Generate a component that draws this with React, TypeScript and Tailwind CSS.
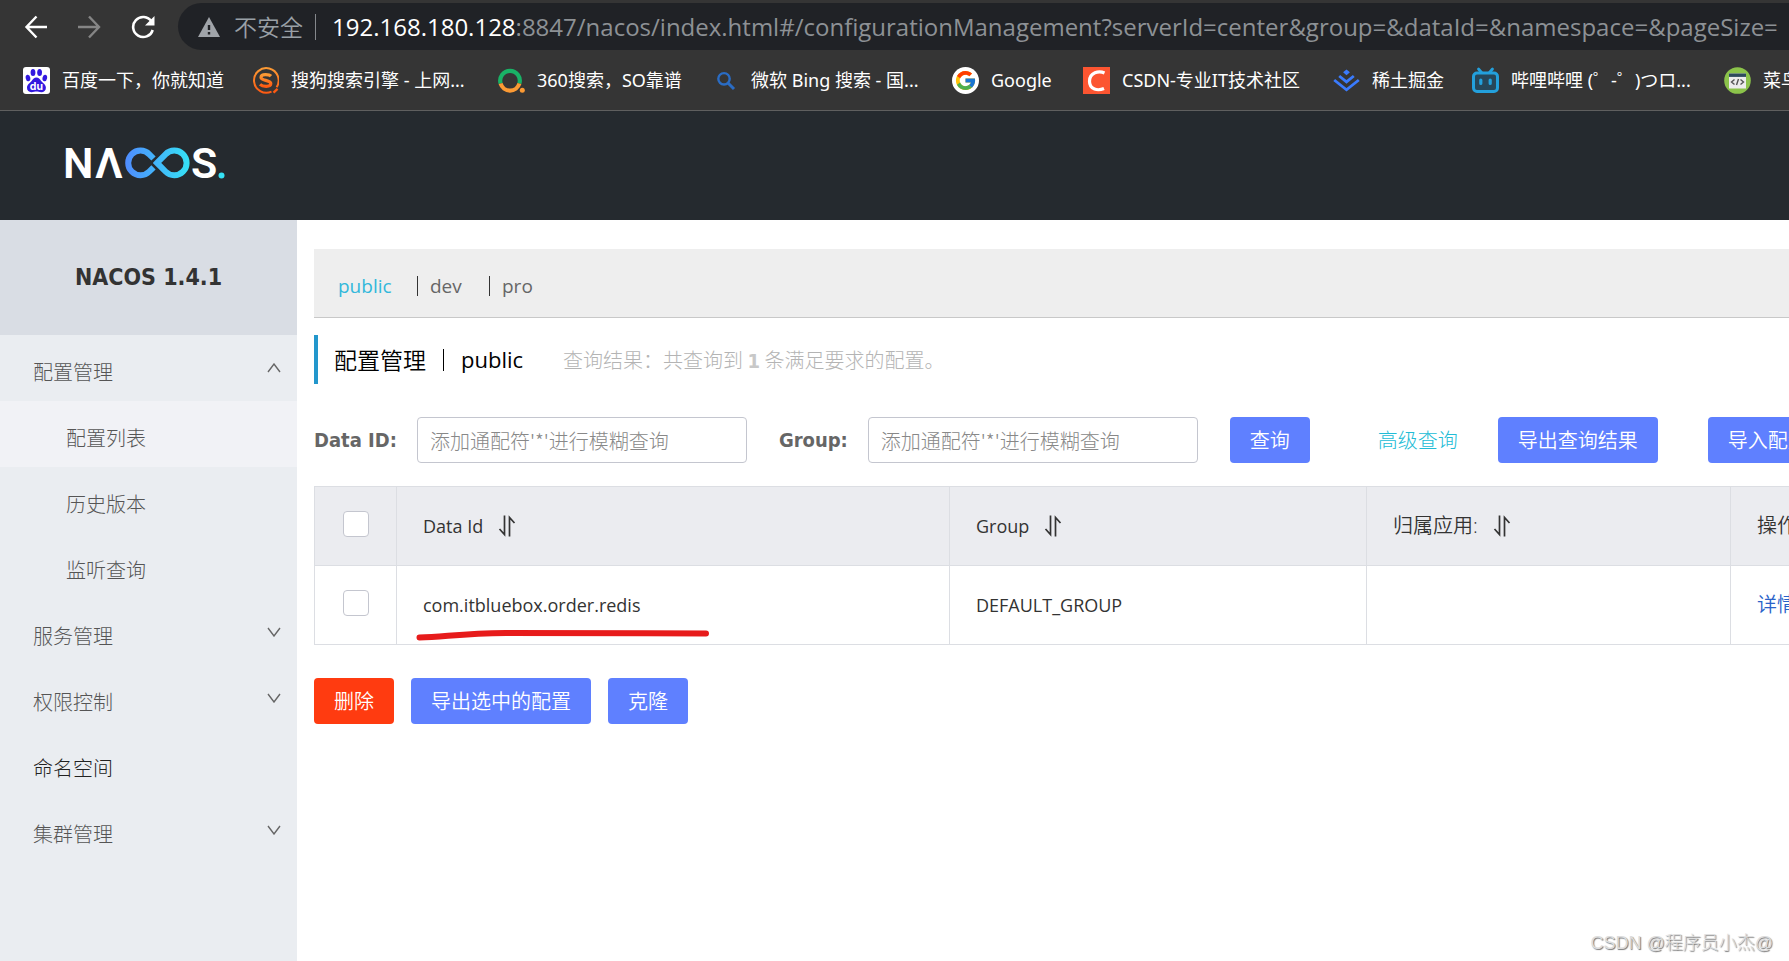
import { useState, type ReactNode } from "react";
import { FcGoogle } from "react-icons/fc";

const LATIN = "font-['Open_Sans','Noto_Sans_CJK_SC',sans-serif]";
const BOLD = "font-['DejaVu_Sans_Condensed','Noto_Sans_CJK_SC',sans-serif] font-bold";

function BaiduIcon() {
  return (
    <svg viewBox="0 0 27 27" className="size-[27px]">
      <rect width="27" height="27" rx="3" fill="#fff" />
      <g fill="#3218df">
        <ellipse cx="10" cy="5.6" rx="2.4" ry="3.5" />
        <ellipse cx="16.6" cy="5.6" rx="2.4" ry="3.5" />
        <ellipse cx="5" cy="11" rx="2.3" ry="3.2" transform="rotate(-12 5 11)" />
        <ellipse cx="21.8" cy="11" rx="2.3" ry="3.2" transform="rotate(12 21.8 11)" />
        <path d="M13.4 10.6c2.2 0 3.4 1.4 4.6 3.2 1.5 2 4.9 3.6 4.9 7 0 3-2.2 4.5-4.7 4.400-1.900-.1-3.200-.6-4.800-.6s-3 .5-4.800.6C6 25.300 4 23.700 4 20.800c0-3.400 3.300-4.900 4.800-7 1.200-1.800 2.400-3.200 4.600-3.200z" />
      </g>
      <text x="13.4" y="22.6" textAnchor="middle" fontSize="10.5" fontWeight="700" fontFamily="Inter" fill="#fff">du</text>
    </svg>
  );
}

function SogouIcon() {
  return (
    <svg viewBox="0 0 27 27" className="size-[27px]">
      <defs>
        <linearGradient id="sogou" x1="0" y1="0" x2="0" y2="1">
          <stop offset="0" stopColor="#fb9a34" />
          <stop offset="1" stopColor="#fd5a12" />
        </linearGradient>
      </defs>
      <path d="M24.6 20.2A12.3 12.3 0 1 0 19.5 24.6" fill="none" stroke="url(#sogou)" strokeWidth="2" />
      <path d="M21.5 25.6l4-3.8" stroke="#fd5a12" strokeWidth="2.4" />
      <path d="M19 9.2C17.5 7.6 9.3 6.4 9 10.3c-.2 3.7 9.8 2.4 9.8 6.3 0 3.9-8.3 3.3-10.8.8" fill="none" stroke="url(#sogou)" strokeWidth="3.2" />
    </svg>
  );
}

function So360Icon() {
  return (
    <svg viewBox="0 0 27 27" className="size-[27px]">
      <path d="M2.6 16.5A9.8 9.8 0 1 1 21.4 16.5" fill="none" stroke="#19b266" strokeWidth="4.2" />
      <path d="M2.6 16.5A9.8 9.8 0 0 0 21.4 16.5" fill="none" stroke="#fb9a34" strokeWidth="4.2" />
      <circle cx="24.3" cy="23.3" r="2.5" fill="#fb9a34" />
    </svg>
  );
}

function BingIcon() {
  return (
    <svg viewBox="0 0 27 27" className="size-[27px]">
      <g fill="none" stroke="#2a6cc4" strokeWidth="2.4">
        <circle cx="12" cy="11.8" r="5.7" />
        <path d="M16 16l6 6" strokeWidth="3" />
      </g>
    </svg>
  );
}

function GoogleIcon() {
  return (
    <span className="flex size-[27px] items-center justify-center rounded-full bg-white">
      <FcGoogle size={23} />
    </span>
  );
}

function CsdnIcon() {
  return (
    <svg viewBox="0 0 27 27" className="size-[27px]">
      <rect width="27" height="27" fill="#fc5531" />
      <path d="M21.5 6C16 3.4 6.5 5.3 6.5 14.3c0 8.600 8.500 9.700 14.500 7.200" fill="none" stroke="#fff" strokeWidth="3.2" />
    </svg>
  );
}

function JuejinIcon() {
  return (
    <svg viewBox="0 0 27 27" className="size-[27px]">
      <path d="M13.5 2.400l3.400 2.900-3.400 2.900-3.400-2.900z" fill="#3a7bfd" />
      <g fill="none" stroke="#3a7bfd" strokeWidth="2.8">
        <path d="M6.2 9l7.3 5.900L20.800 9" />
        <path d="M1.200 13l12.300 9.800L25.800 13" />
      </g>
    </svg>
  );
}

function BilibiliIcon() {
  return (
    <svg viewBox="0 0 27 27" className="size-[27px]">
      <rect x="1.5" y="6" width="24" height="18.5" rx="3.5" fill="#26475a" stroke="#23a0dc" strokeWidth="3" />
      <path d="M6.500 2l3 3.500M20.500 2l-3 3.500" stroke="#23a0dc" strokeWidth="2.800" strokeLinecap="round" />
      <path d="M8.800 13v3.500M18.200 13v3.500" stroke="#23a0dc" strokeWidth="3.200" strokeLinecap="round" />
    </svg>
  );
}

function RunoobIcon() {
  return (
    <svg viewBox="0 0 27 27" className="size-[27px]">
      <circle cx="13.5" cy="13.5" r="13.3" fill="#8bc34a" />
      <rect x="5" y="6.500" width="17" height="15" fill="#ececec" />
      <rect x="5" y="6.500" width="17" height="3.400" fill="#2d4a5c" />
      <path d="M10.500 12.500L7.500 15l3 2.500M16.500 12.500l3 2.500-3 2.500M14.500 12l-2 6" fill="none" stroke="#555" strokeWidth="1.4" />
    </svg>
  );
}

function NacosLogo() {
  return (
    <svg viewBox="0 0 164 48" className="h-12 w-41" role="img" aria-label="NACOS.">
      <defs>
        <linearGradient id="loop" gradientUnits="userSpaceOnUse" x1="60" y1="0" x2="125" y2="0">
          <stop offset="0" stopColor="#4f8cff" />
          <stop offset="1" stopColor="#35e2f5" />
        </linearGradient>
      </defs>
      <g transform="translate(4 8)">
        <g fill="#fff" fontFamily="Roboto" fontWeight="600" fontSize="43">
          <text x="-2" y="31">N</text>
          <text x="30" y="31">Λ</text>
          <text x="126" y="31">S</text>
        </g>
        <g fill="none" stroke="url(#loop)" strokeWidth="6">
          <path d="M88.5 11.500L84.300 7.300A12.300 12.300 0 1 0 84.300 24.500L88.500 20.300" />
          <path d="M92 15.900L100.500 7.300A12.300 12.300 0 1 1 100.500 24.500z" />
        </g>
        <circle cx="156.5" cy="28.5" r="3" fill="#35e2f5" />
      </g>
    </svg>
  );
}

function SortIcon() {
  return (
    <svg viewBox="0 0 18 22" className="h-[22px] w-[18px]" fill="none" stroke="#333" strokeWidth="1.7">
      <path d="M6.500 0.500v19L1.500 14M11.500 21.500v-19L16.500 8" />
    </svg>
  );
}

const bookmarks: { icon: ReactNode; label: string; width: string }[] = [
  { icon: <BaiduIcon />, label: "百度一下，你就知道", width: "w-[164px]" },
  { icon: <SogouIcon />, label: "搜狗搜索引擎 - 上网...", width: "w-[181px]" },
  { icon: <So360Icon />, label: "360搜索，SO靠谱", width: "w-[149px]" },
  { icon: <BingIcon />, label: "微软 Bing 搜索 - 国...", width: "w-[175px]" },
  { icon: <GoogleIcon />, label: "Google", width: "w-[66px]" },
  { icon: <CsdnIcon />, label: "CSDN-专业IT技术社区", width: "w-[185px]" },
  { icon: <JuejinIcon />, label: "稀土掘金", width: "w-[74px]" },
  { icon: <BilibiliIcon />, label: "哔哩哔哩 (゜-゜)つロ...", width: "w-[187px]" },
  { icon: <RunoobIcon />, label: "菜鸟教程", width: "w-[72px]" },
];

function Browser() {
  return (
    <div className="border-b border-[#5f5f5f] bg-[#353535]">
      <div className="flex h-[54px] items-center pb-px pl-[23px]">
        <button aria-label="后退" className="mr-7">
          <svg viewBox="0 0 26 26" className="size-[26px]" fill="none" stroke="#fff" strokeWidth="2.4">
            <path d="M24 13H4M13.5 2.500L3.500 13l10 10.500" />
          </svg>
        </button>
        <button aria-label="前进" className="mr-7">
          <svg viewBox="0 0 26 26" className="size-[26px]" fill="none" stroke="#858585" strokeWidth="2.4">
            <path d="M1 13h21M12 2.500L22 13 12 23.500" />
          </svg>
        </button>
        <button aria-label="重新加载" className="mr-[23px]">
          <svg viewBox="0 0 24 24" className="size-6" fill="none" stroke="#fff" strokeWidth="2.6">
            <path d="M20.500 6.500A10 10 0 1 0 21.700 15" />
            <path d="M23.500 1v9.500H14z" fill="#fff" stroke="none" />
          </svg>
        </button>
        <div className="flex h-[47px] min-w-0 flex-1 items-center overflow-hidden rounded-l-full bg-[#202226] pl-5 whitespace-nowrap">
          <svg viewBox="0 0 22 20" className="mr-[14px] h-5 w-[22px] shrink-0">
            <path d="M11 0l11 20H0z" fill="#a0a4a9" />
            <path d="M11 8v5M11 15v2.400" stroke="#202226" strokeWidth="2.4" />
          </svg>
          <span className="font-['Noto_Sans_CJK_SC',sans-serif] text-[23px] font-[350] text-[#9aa0a6]">不安全</span>
          <span className="mr-4 ml-3 h-[26px] w-px shrink-0 bg-[#85888c]" />
          <span className={`${LATIN} text-[24px] text-[#8d9195]`}>
            <span className="text-white">192.168.180.128</span>
            :8847/nacos/index.html#/configurationManagement?serverId=center&amp;group=&amp;dataId=&amp;namespace=&amp;pageSize=
          </span>
        </div>
      </div>
      <nav className="flex h-14 items-center gap-[26px] overflow-hidden pb-1 pl-[23px]">
        {bookmarks.map((b) => (
          <a key={b.label} href="#" className="flex shrink-0 items-center gap-3 text-white">
            {b.icon}
            <span className={`${b.width} font-['Noto_Sans','Noto_Sans_CJK_SC',sans-serif] text-[18px] whitespace-nowrap`}>{b.label}</span>
          </a>
        ))}
      </nav>
    </div>
  );
}

function Chevron({ up }: { up?: boolean }) {
  return (
    <svg viewBox="0 0 14 10" className="mb-2 h-[10px] w-[14px]" fill="none" stroke="#666" strokeWidth="1.4">
      <path d={up ? "M1 9l6-8 6 8" : "M1 1l6 8 6-8"} />
    </svg>
  );
}

const menu: { label: string; child?: boolean; active?: boolean; dark?: boolean; arrow?: "up" | "down" }[] = [
  { label: "配置管理", arrow: "up" },
  { label: "配置列表", child: true, active: true },
  { label: "历史版本", child: true },
  { label: "监听查询", child: true },
  { label: "服务管理", arrow: "down" },
  { label: "权限控制", arrow: "down" },
  { label: "命名空间", dark: true },
  { label: "集群管理", arrow: "down" },
];

function Sidebar() {
  return (
    <aside className="w-[297px] shrink-0 bg-[#eaedf1]">
      <h1 className={`${BOLD} flex h-[115px] items-center justify-center bg-[#d9dde4] text-[23px] text-[#333]`}>NACOS 1.4.1</h1>
      <ul>
        {menu.map((m) => (
          <li key={m.label}>
            <a
              href="#"
              className={`flex h-[66px] items-center justify-between pt-2 pr-4 text-[20px] font-light ${m.child ? "pl-[66px]" : "pl-[33px]"} ${m.active ? "bg-[#f1f2f6]" : ""} ${m.dark ? "text-[#222]" : "text-[#555]"}`}
            >
              {m.label}
              {m.arrow && <Chevron up={m.arrow === "up"} />}
            </a>
          </li>
        ))}
      </ul>
    </aside>
  );
}

function Button({ children, danger, className = "" }: { children: ReactNode; danger?: boolean; className?: string }) {
  return (
    <button className={`h-[46px] shrink-0 rounded px-5 text-[20px] font-[350] whitespace-nowrap text-white ${danger ? "bg-[#ff3b10]" : "bg-[#5f80ff]"} ${className}`}>
      {children}
    </button>
  );
}

function SearchField({ id, label }: { id: string; label: string }) {
  const [value, setValue] = useState("");
  return (
    <div className="mr-8 flex shrink-0 items-center gap-5">
      <label htmlFor={id} className={`${BOLD} text-[20px] text-[#666]`}>{label}</label>
      <input
        id={id}
        value={value}
        onChange={(e) => setValue(e.target.value)}
        placeholder="添加通配符'*'进行模糊查询"
        className="h-[46px] w-[330px] rounded border border-[#c4c6cf] px-3 text-[20px] font-light placeholder:text-[#888]"
      />
    </div>
  );
}

function Check({ label }: { label: string }) {
  return (
    <input
      type="checkbox"
      aria-label={label}
      className="mx-auto mb-1 block size-[26px] appearance-none rounded border border-[#c4c6cf] bg-white checked:bg-[#5f80ff]"
    />
  );
}

function HeadCell({ children, width }: { children: ReactNode; width: string }) {
  return (
    <th className={`${width} border border-[#dcdee3] pl-[26px] text-left font-normal`}>
      <span className="flex items-center gap-[15px]">
        {children}
        <SortIcon />
      </span>
    </th>
  );
}

function Main() {
  const cell = "border border-[#dcdee3]";
  return (
    <main className="min-w-0 flex-1 overflow-hidden pt-[29px] pl-[17px]">
      <nav className={`${LATIN} flex h-[69px] items-center border-b border-[#c8c8c8] bg-[#eee] pt-[6px] pl-6 text-[19px]`}>
        <a href="#" className="w-[79px] text-[#33b8db]">public</a>
        <span className="mr-3 h-5 w-px bg-[#333]" />
        <a href="#" className="w-[59px] text-[#666]">dev</a>
        <span className="mr-3 h-5 w-px bg-[#333]" />
        <a href="#" className="text-[#666]">pro</a>
      </nav>

      <div className="mt-[17px] flex h-[49px] items-center border-l-4 border-[#2397cc] pl-4 whitespace-nowrap">
        <h2 className="flex items-center text-[23px] text-black">
          <span className="font-[350]">配置管理</span>
          <span className="mx-[17px] h-[22px] w-px bg-black" />
          <span className={`${LATIN} text-[22px]`}>public</span>
        </h2>
        <p className="ml-10 pt-[2px] text-[20px] font-light text-[#b4b4b4]">
          查询结果：共查询到 <strong className={`${BOLD} text-[#c8c8c8]`}>1</strong> 条满足要求的配置。
        </p>
      </div>

      <form className="mt-[33px] flex items-center" onSubmit={(e) => e.preventDefault()}>
        <SearchField id="data-id" label="Data ID:" />
        <SearchField id="group" label="Group:" />
        <Button>查询</Button>
        <a href="#" className="mr-10 ml-[68px] shrink-0 text-[20px] font-light text-[#22bcd6]">高级查询</a>
        <Button className="mr-[50px]">导出查询结果</Button>
        <Button>导入配置</Button>
      </form>

      <div className="relative mt-[23px]">
        <table className={`${LATIN} w-[1620px] table-fixed border-collapse text-[18px] text-[#333]`}>
          <thead className="bg-[#ebecf0]">
            <tr className="h-[79px]">
              <th className={`${cell} w-[82px]`}><Check label="全选" /></th>
              <HeadCell width="w-[553px]">Data Id</HeadCell>
              <HeadCell width="w-[417px]">Group</HeadCell>
              <HeadCell width="w-[364px]"><span className="text-[20px] font-[350]">归属应用:</span></HeadCell>
              <th className={`${cell} pl-[26px] text-left text-[20px] font-[350]`}>操作</th>
            </tr>
          </thead>
          <tbody>
            <tr className="h-[79px]">
              <td className={cell}><Check label="选择 com.itbluebox.order.redis" /></td>
              <td className={`${cell} pl-[26px]`}>com.itbluebox.order.redis</td>
              <td className={`${cell} pl-[26px]`}>DEFAULT_GROUP</td>
              <td className={cell} />
              <td className={`${cell} pl-[26px] text-[20px] font-[350]`}><a href="#" className="text-[#2a62c9]">详情</a></td>
            </tr>
          </tbody>
        </table>
        <svg viewBox="0 0 294 12" className="absolute bottom-1 left-[102px] h-3 w-[294px]" fill="none" stroke="#e71b1b" strokeWidth="6" strokeLinecap="round">
          <path d="M3.500 8.500C28 8 45 4.500 90 4S220 4.500 290 4.500" />
        </svg>
      </div>

      <div className="mt-[33px] flex gap-[17px]">
        <Button danger>删除</Button>
        <Button>导出选中的配置</Button>
        <Button>克隆</Button>
      </div>
    </main>
  );
}

export default function App() {
  return (
    <div className="relative flex min-h-screen flex-col overflow-hidden bg-white font-['Noto_Sans_CJK_SC',sans-serif]">
      <Browser />
      <header className="flex h-[109px] items-center bg-[#252a2f] pb-[6px] pl-[61px]">
        <NacosLogo />
      </header>
      <div className="flex flex-1">
        <Sidebar />
        <Main />
      </div>
      <div className="absolute right-4 bottom-1 font-['Liberation_Sans','Noto_Sans_CJK_SC',sans-serif] text-[18px] font-light text-[#ddd] [text-shadow:1px_1px_1px_#777]">
        CSDN @程序员小杰@
      </div>
    </div>
  );
}
